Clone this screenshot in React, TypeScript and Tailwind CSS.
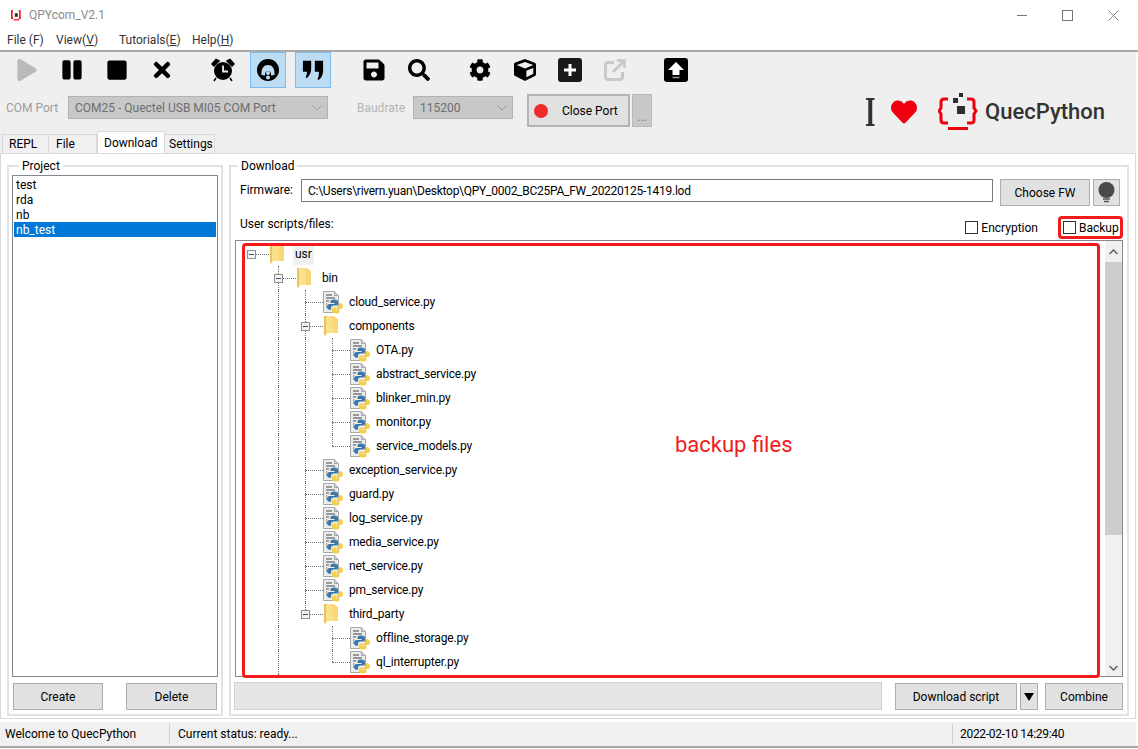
import { FaPlay, FaPause, FaStop, FaTimes, FaSave, FaSearch, FaCog, FaCube, FaHeart } from "react-icons/fa"

type TreeRow = { name: string; depth: number; kind: "folder" | "py"; last?: boolean; skip?: boolean }

const rows: TreeRow[] = [
  { name: "usr", depth: 0, kind: "folder" },
  { name: "bin", depth: 1, kind: "folder" },
  { name: "cloud_service.py", depth: 2, kind: "py" },
  { name: "components", depth: 2, kind: "folder" },
  { name: "OTA.py", depth: 3, kind: "py" },
  { name: "abstract_service.py", depth: 3, kind: "py" },
  { name: "blinker_min.py", depth: 3, kind: "py" },
  { name: "monitor.py", depth: 3, kind: "py" },
  { name: "service_models.py", depth: 3, kind: "py", last: true },
  { name: "exception_service.py", depth: 2, kind: "py" },
  { name: "guard.py", depth: 2, kind: "py" },
  { name: "log_service.py", depth: 2, kind: "py" },
  { name: "media_service.py", depth: 2, kind: "py" },
  { name: "net_service.py", depth: 2, kind: "py" },
  { name: "pm_service.py", depth: 2, kind: "py" },
  { name: "third_party", depth: 2, kind: "folder", last: true },
  { name: "offline_storage.py", depth: 3, kind: "py", skip: true },
  { name: "ql_interrupter.py", depth: 3, kind: "py", skip: true, last: true },
]

function FolderIcon() {
  return (
    <svg width="15" height="21" viewBox="0 0 15 21" className="block">
      <path d="M0 0h9l5 3v14H3l-1 3-2-1z" fill="#fbe08c" />
      <path d="M8 0h1l5 3v14H9z" fill="#f8d775" />
      <path d="M0 0h2v19l-2-1z" fill="#e6c260" />
    </svg>
  )
}

const snake = "M12 8.500c-2.500 0-3.500.8-3.500 2v1.500h4v1H7.500c-1.500 0-2.500 1-2.500 2.800s1 3 2.300 3H9v-2c0-1.300 1-2.300 2.500-2.300h3c1 0 1.500-.7 1.500-1.500v-2.500c0-1.200-1.500-2-4-2z"

function PyIcon() {
  return (
    <svg width="21" height="23" viewBox="0 0 21 23" className="block -ml-[2px]">
      <path d="M1.500 .5h11l4 4v17h-15z" fill="#ececec" stroke="#a8a8a8" />
      <path d="M12.500 .5v4h4" fill="#d0d0d0" stroke="#a8a8a8" />
      <path d="M4 4h6M4 7h9M4 10h3M4 13h1M4 16h1" stroke="#7d7d7d" strokeWidth="1.400" />
      <path d={snake} fill="#3b78aa" />
      <path d={snake} fill="#f7cf45" transform="rotate(180 13 15.500)" />
    </svg>
  )
}

function Row({ row }: { row: TreeRow }) {
  const ancestors = []
  for (let i = 1; i < row.depth; i++) {
    const on = !(row.skip && i === 2)
    ancestors.push(<div key={i} className={on ? "w-[27px] self-stretch border-l border-dotted border-[#707070]" : "w-[27px] self-stretch"} />)
  }
  return (
    <div className="flex h-6 shrink-0 items-center">
      {row.depth > 0 && <div className="w-[27px] shrink-0" />}
      {ancestors}
      <div className="relative w-[19px] shrink-0 self-stretch">
        {row.depth > 0 && (
          <div className={row.last ? "h-3 border-l border-dotted border-[#707070]" : "h-6 border-l border-dotted border-[#707070]"} />
        )}
        <div className="absolute left-0 top-3 w-[18px] border-t border-dotted border-[#707070]" />
        {row.kind === "folder" && (
          <div className="absolute -left-1 top-2 flex h-[9px] w-[9px] items-center justify-center border border-[#8f8f8f] bg-[#f4f4f4]">
            <div className="h-px w-[5px] bg-[#39507a]" />
          </div>
        )}
      </div>
      <div className="w-[25px] shrink-0">{row.kind === "folder" ? <FolderIcon /> : <PyIcon />}</div>
      <span className={row.name === "usr" ? "-mx-0.5 bg-[#f0f0f0] px-0.5 py-[3px] text-black" : "tracking-[-0.15px] text-black"}>{row.name}</span>
    </div>
  )
}

function ToolButton({ children, active, gap }: { children: React.ReactNode; active?: boolean; gap?: boolean }) {
  return (
    <div
      className={`flex h-9 w-9 items-center justify-center border ${active ? "border-[#7fbcec] bg-[#bcdcf4]" : "border-transparent"} ${gap ? "ml-4" : ""}`}
    >
      {children}
    </div>
  )
}

function Btn({ children, className }: { children: React.ReactNode; className: string }) {
  return (
    <div className={`flex h-[27px] items-center justify-center border border-[#adadad] bg-[#e1e1e1] text-black ${className}`}>
      {children}
    </div>
  )
}

function Combo({ text, className }: { text: string; className: string }) {
  return (
    <div className={`flex h-[23px] items-center justify-between border border-[#b2b2b2] bg-[#c8c8c8] pl-[6px] pr-[5px] text-[#6d6d6d] ${className}`}>
      <span>{text}</span>
      <svg width="10" height="6" viewBox="0 0 10 6"><path d="M.5.5 5 5 9.500.5" fill="none" stroke="#9a9a9a" /></svg>
    </div>
  )
}

function Tab({ label, className }: { label: string; className: string }) {
  return <div className={`flex items-center border border-b-0 border-[#d9d9d9] ${className}`}>{label}</div>
}

function Logo() {
  return (
    <svg width="40" height="40" viewBox="0 0 40 40" className="block">
      <path d="M10 7H6Q3 7 3 10V16L1 19L3 22V28Q3 31 6 31H10M29 7H33Q36 7 36 10V16L38 19L36 22V28Q36 31 33 31H29" fill="none" stroke="#ee0010" strokeWidth="3" />
      <rect x="10" y="35" width="20" height="3" fill="#ee0010" />
      <rect x="15" y="6" width="5" height="5" fill="#2f2f2f" />
      <rect x="21" y="1" width="4" height="4" fill="#2f2f2f" />
      <rect x="19" y="14" width="8" height="8" fill="#2f2f2f" />
    </svg>
  )
}

export default function App() {
  return (
    <div className="flex h-[749px] w-[1138px] flex-col overflow-hidden bg-white pr-[2px] font-['Roboto',sans-serif] text-xs leading-4 text-[#222]">
      {/* title bar */}
      <div className="flex h-[30px] shrink-0 items-center pl-[10px]">
        <svg width="12" height="12" viewBox="0 0 40 40" className="block">
          <path d="M10 7H6V31H10M29 7H33V31H29" fill="none" stroke="#ee0010" strokeWidth="5" />
          <rect x="12" y="34" width="18" height="4" fill="#ee0010" />
          <rect x="16" y="14" width="10" height="12" fill="#2f2f2f" />
        </svg>
        <span className="ml-[7px] text-[#8a8a8a]">QPYcom_V2.1</span>
        <div className="ml-auto flex items-center">
          <div className="mr-[35px] h-px w-[10px] bg-[#777]" />
          <div className="mr-[35px] h-[11px] w-[11px] border border-[#777]" />
          <svg width="11" height="11" viewBox="0 0 11 11" className="mr-[17px]"><path d="M.5.5l10 10M10.500.5l-10 10" stroke="#888" /></svg>
        </div>
      </div>
      {/* menu */}
      <div className="flex h-5 shrink-0 items-center pl-[7px] text-[#333]">
        <span className="w-[49px]">File (F)</span>
        <span className="w-[63px]">View(<u>V</u>)</span>
        <span className="w-[73px]">Tutorials(<u>E</u>)</span>
        <span>Help(<u>H</u>)</span>
      </div>
      <div className="h-[2px] w-[1138px] shrink-0 bg-[#a8a8a8]" />
      {/* toolbar */}
      <div className="shrink-0 bg-[#efefef]">
        <div className="flex h-[36px] items-center gap-[9px] pl-[9px] text-[22px] text-black">
          <ToolButton><FaPlay className="text-[#b9b9b9]" /></ToolButton>
          <ToolButton><FaPause /></ToolButton>
          <ToolButton><FaStop /></ToolButton>
          <ToolButton><FaTimes className="text-[24px]" /></ToolButton>
          <ToolButton gap>
            <svg width="24" height="24" viewBox="0 0 24 24">
              <circle cx="12" cy="13" r="9" />
              <path d="M12 7.500V13.500H17" fill="none" stroke="#efefef" strokeWidth="1.800" />
              <path d="M1 6 5 1.500 8 3 3 8zM23 6 19 1.500 16 3 21 8zM5 20 3 23M19 20l2 3" stroke="#000" strokeWidth="1.500" />
            </svg>
          </ToolButton>
          <ToolButton active>
            <svg width="24" height="24" viewBox="0 0 24 24">
              <circle cx="12" cy="12" r="11" />
              <path d="M5.500 17C5 10 8 7 12 7s7 3 6.500 10l-3.500.5C15 14 14 13 12 13s-3 1-3 4.500z" fill="#bcdcf4" />
              <circle cx="12" cy="15" r="2" fill="#bcdcf4" />
              <circle cx="12" cy="19.500" r="2" fill="#bcdcf4" />
            </svg>
          </ToolButton>
          <ToolButton active>
            <svg width="22" height="22" viewBox="0 0 24 24">
              <path d="M1 2h9v9c0 4-2 8-5 10l-1-1c1-2 1.500-4 1.500-6H1zM14 2h9v11c0 4-2 8-5 10l-1-1c1-2 1.500-5 1.500-8H14z" />
            </svg>
          </ToolButton>
          <ToolButton gap><FaSave className="text-[24px]" /></ToolButton>
          <ToolButton><FaSearch /></ToolButton>
          <ToolButton gap><FaCog /></ToolButton>
          <ToolButton><FaCube /></ToolButton>
          <ToolButton>
            <svg width="24" height="24" viewBox="0 0 24 24">
              <rect width="24" height="24" rx="3" fill="#1a1a1a" />
              <path d="M12 6v12M6 12h12" stroke="#fff" strokeWidth="3" />
            </svg>
          </ToolButton>
          <ToolButton>
            <svg width="22" height="22" viewBox="0 0 22 22" fill="none" stroke="#c8c8c8" strokeWidth="3">
              <path d="M10 3.500H4A2.500 2.500 0 0 0 1.500 6v12A2.500 2.500 0 0 0 4 20.500h12a2.500 2.500 0 0 0 2.500-2.500v-5" />
              <path d="M9 13 19 3" />
              <path d="M13 1.500h7.500V9" strokeWidth="2.500" />
            </svg>
          </ToolButton>
          <ToolButton gap>
            <svg width="24" height="24" viewBox="0 0 24 24">
              <rect width="24" height="24" rx="3" fill="#000" />
              <path d="M12 4 20 12H15.500V17H8.500V12H4z" fill="#fff" />
              <path d="M8.500 19.500H15.500" stroke="#999" strokeWidth="1.500" />
            </svg>
          </ToolButton>
        </div>
        <div className="flex h-[42px] items-start pl-[6px] pt-[6px] pr-[31px]">
          <span className="mt-[2px] flex h-[23px] w-[62px] items-center text-[#9d9d9d]">COM Port</span>
          <Combo text="COM25 - Quectel USB MI05 COM Port" className="mt-[2px] w-[260px]" />
          <span className="ml-[29px] mt-[2px] flex h-[23px] w-[56px] items-center text-[#b4b4b4]">Baudrate</span>
          <Combo text="115200" className="mt-[2px] w-[100px] pl-[3px]" />
          <div className="ml-[14px] flex h-[33px] w-[103px] items-center border-2 border-[#b4b4b4] bg-[#e1e1e1] pl-[5px] text-black">
            <div className="h-[14px] w-[14px] rounded-full bg-[#ee2a2a]" />
            <span className="ml-[14px]">Close Port</span>
          </div>
          <div className="ml-[2px] flex h-[33px] w-5 items-end justify-center border border-[#b8b8b8] bg-[#c8c8c8] pb-px text-[#777]">...</div>
          <div className="ml-auto flex h-[36px] items-center">
            <svg width="9" height="28" viewBox="0 0 9 28" className="block">
              <path d="M0 1h8.500M0 27h8.500" stroke="#333" strokeWidth="2" />
              <path d="M4.250 1v26" stroke="#333" strokeWidth="4" />
            </svg>
            <FaHeart className="ml-[16px] text-[26px] text-[#ee0010]" />
            <div className="ml-[21px]"><Logo /></div>
            <span className="ml-[7px] text-[22px] font-medium text-[#333]">QuecPython</span>
          </div>
        </div>
      </div>
      {/* tabs */}
      <div className="flex h-[23px] shrink-0 items-end bg-[#efefef] pl-[2px] text-black">
        <Tab label="REPL" className="h-[19px] w-[47px] bg-[#f0f0f0] pl-[6px]" />
        <Tab label="File" className="h-[19px] w-[48px] border-l-0 bg-[#f0f0f0] pl-[7px]" />
        <Tab label="Download" className="h-[22px] w-[68px] bg-white pl-[6px]" />
        <Tab label="Settings" className="h-[19px] w-[50px] border-l-0 bg-[#f0f0f0] pl-[4px]" />
      </div>
      {/* pane */}
      <div className="flex h-[566px] shrink-0 gap-[6px] border border-[#d9d9d9] bg-white pl-[6px] pt-[11px] pb-[2px]">
        {/* project */}
        <div className="relative flex w-[216px] flex-col border-2 border-[#e2e2e2] px-[3px] pt-[8px]">
          <span className="absolute -top-[9px] left-[10px] bg-white px-[3px] text-black">Project</span>
          <div className="h-[502px] border border-[#828790] p-[1px] text-black">
            <div className="h-[15px] pl-[2px] leading-[17px]">test</div>
            <div className="h-[15px] pl-[2px] leading-[17px]">rda</div>
            <div className="h-[15px] pl-[2px] leading-[17px]">nb</div>
            <div className="h-[15px] bg-[#0078d7] pl-[2px] leading-[17px] text-white">nb_test</div>
          </div>
          <div className="mt-[6px] flex justify-between pl-px pr-px">
            <Btn className="w-[90px]">Create</Btn>
            <Btn className="w-[91px]">Delete</Btn>
          </div>
        </div>
        {/* download */}
        <div className="relative flex w-[900px] flex-col border-2 border-[#e2e2e2] pl-[4px] pt-[12px]">
          <span className="absolute -top-[9px] left-[7px] bg-white px-[3px] text-black">Download</span>
          <div className="flex h-[27px] shrink-0 items-start pl-[5px]">
            <span className="mt-[3px] w-[61px] text-black">Firmware:</span>
            <div className="flex h-[23px] w-[692px] items-center border border-[#7a7a7a] pl-[6px] tracking-[-0.26px] text-black">
              C:\Users\rivern.yuan\Desktop\QPY_0002_BC25PA_FW_20220125-1419.lod
            </div>
            <Btn className="ml-[7px] w-[90px]">Choose FW</Btn>
            <div className="ml-[3px] flex h-[27px] w-[27px] items-center justify-center border border-[#adadad] bg-[#e1e1e1]">
              <svg width="17" height="22" viewBox="0 0 17 22">
                <circle cx="8.500" cy="8" r="8" fill="#4a4a4a" />
                <path d="M5 17h7M6 19.500h5" stroke="#555" strokeWidth="1.500" />
              </svg>
            </div>
          </div>
          <div className="relative flex h-[34px] shrink-0 items-start pl-[5px] pt-[10px] text-black">
            <span>User scripts/files:</span>
            <div className="ml-auto mr-[4px] flex items-center">
              <div className="h-[13px] w-[13px] border border-[#333] bg-white" />
              <span className="ml-[3px]">Encryption</span>
              <div className="ml-[20px] flex h-[23px] w-[65px] items-center rounded-sm border-[3px] border-[#f21a1a] pl-[2px]">
                <div className="h-[13px] w-[13px] border border-[#333] bg-white" />
                <span className="ml-[3px]">Backup</span>
              </div>
            </div>
          </div>
          {/* tree */}
          <div className="relative flex h-[437px] w-[888px] shrink-0 border border-[#828790]">
            <div className="flex flex-1 flex-col overflow-hidden pl-[15px] pt-[1px]">
              {rows.map((r) => <Row key={r.name} row={r} />)}
              <div className="ml-[27px] h-6 shrink-0 border-l border-dotted border-[#707070]" />
            </div>
            <div className="flex w-[17px] shrink-0 flex-col bg-[#f0f0f0]">
              <div className="flex h-[21px] items-center justify-center">
                <svg width="9" height="6" viewBox="0 0 9 6"><path d="M.500 5 4.500 1l4 4" fill="none" stroke="#606060" strokeWidth="1.500" /></svg>
              </div>
              <div className="h-[273px] bg-[#cdcdcd]" />
              <div className="mt-auto flex h-[17px] items-center justify-center">
                <svg width="9" height="6" viewBox="0 0 9 6"><path d="M.500 1l4 4 4-4" fill="none" stroke="#606060" strokeWidth="1.500" /></svg>
              </div>
            </div>
            <div className="absolute -bottom-[2px] left-[6px] top-[2px] w-[858px] rounded-sm border-[3px] border-[#f21a1a]" />
            <span className="absolute left-[439px] top-[190px] text-[22px] leading-7 text-[#f21a1a]">backup files</span>
          </div>
          <div className="mt-[5px] -ml-px flex shrink-0 items-end">
            <div className="h-[28px] w-[648px] border border-[#d0d0d0] bg-[#e6e6e6]" />
            <Btn className="ml-[13px] w-[122px]">Download script</Btn>
            <Btn className="ml-[3px] w-[18px]">
              <svg width="10" height="8" viewBox="0 0 10 8"><path d="M0 0h10L5 8z" fill="#000" /></svg>
            </Btn>
            <Btn className="ml-[7px] w-[78px]">Combine</Btn>
          </div>
        </div>
      </div>
      {/* status bar */}
      <div className="mt-[3px] flex h-[24px] shrink-0 items-center bg-[#f0f0f0] text-black">
        <span className="w-[169px] pl-[5px]">Welcome to QuecPython</span>
        <div className="h-[20px] w-px bg-[#d0d0d0]" />
        <span className="w-[782px] pl-[8px]">Current status: ready...</span>
        <div className="h-[20px] w-px bg-[#d0d0d0]" />
        <span className="pl-[7px] tracking-[-0.3px]">2022-02-10 14:29:40</span>
      </div>
      <div className="h-[2px] w-[1138px] shrink-0 bg-[#a8a8a8]" />
    </div>
  )
}
